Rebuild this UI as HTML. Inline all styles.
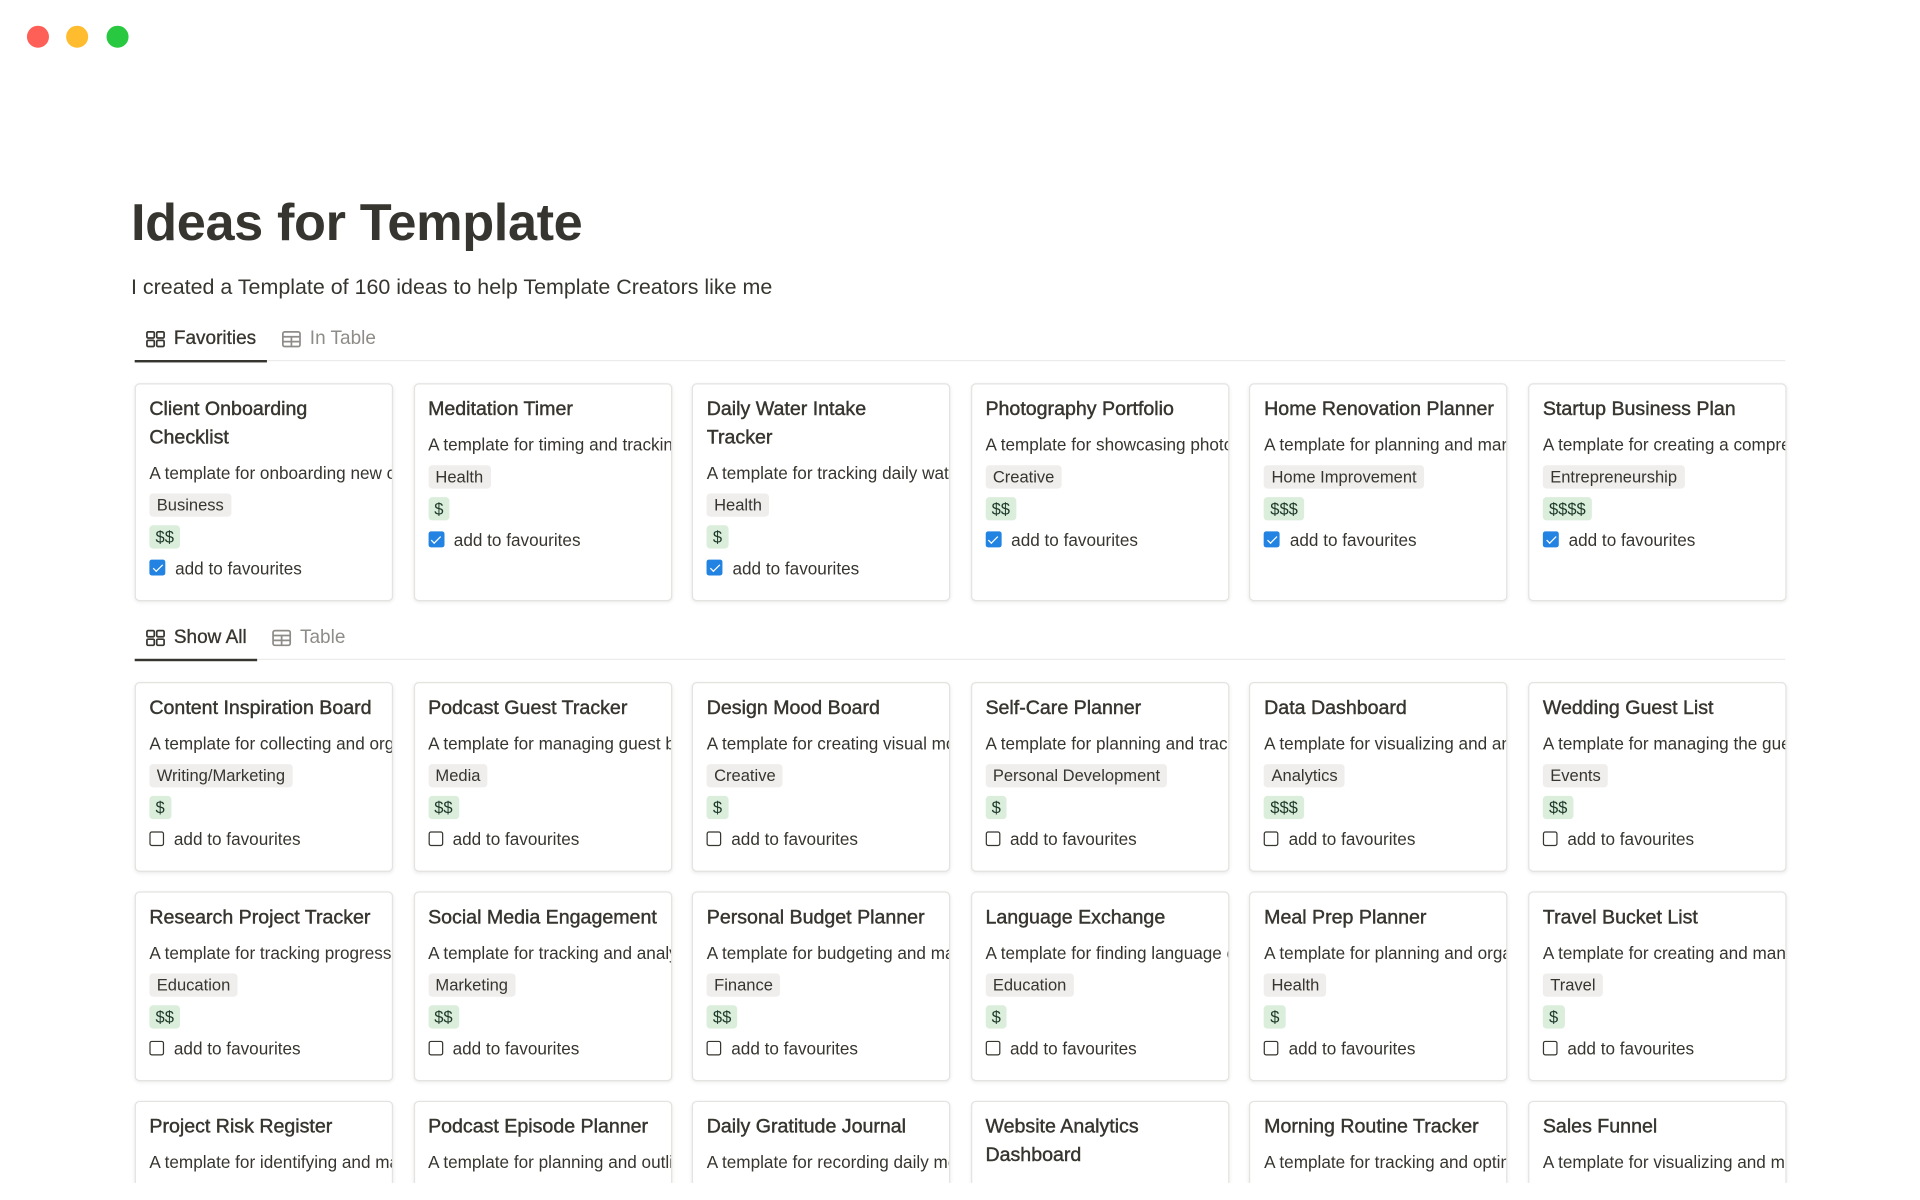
<!DOCTYPE html>
<html><head><meta charset="utf-8"><style>
html,body{margin:0;padding:0;background:#fff;width:1920px;height:1200px;overflow:hidden;}
#w{width:1568px;height:966px;overflow:hidden;position:relative;transform:scale(1.2244898);transform-origin:0 0;font-family:"Liberation Sans",sans-serif;color:#37352f;background:#fff;}
.dot{position:absolute;top:21px;width:18px;height:18px;border-radius:50%;}
h1{position:absolute;left:107px;top:158px;margin:0;font-size:42.7px;font-weight:700;letter-spacing:-0.3px;}
.sub{position:absolute;left:107px;top:224px;font-size:17.5px;}
.tabs{position:absolute;left:110px;width:1348px;height:30px;border-bottom:1.5px solid #ececeb;}
.tab{position:absolute;top:2px;height:22px;display:flex;align-items:center;font-size:15.5px;color:#8e8c88;}
.tab.on{color:#37352f;-webkit-text-stroke:0.25px #37352f;}
.tab.on:after{content:"";position:absolute;left:-9px;right:-9px;bottom:-8px;height:2.5px;background:#37352f;}
.tab svg{margin-right:7px}
.card{position:absolute;width:211px;border:1px solid #e4e3e0;border-radius:4px;box-shadow:0 1px 3px rgba(15,15,15,.08);overflow:hidden;padding:9px 0 0 11px;box-sizing:border-box;background:#fff;}
.t{font-size:16px;line-height:23px;padding-right:8px;-webkit-text-stroke:0.35px #37352f;}
.d{font-size:14px;height:26px;line-height:26px;margin-top:4px;white-space:nowrap;}
.r{height:26px;display:flex;align-items:center;}
.g{background:#efeeec;border-radius:3px;font-size:13.5px;padding:0 6px;height:19px;line-height:19px;}
.p{background:#dbeddb;color:#1c3829;border-radius:3px;font-size:13.5px;padding:0 5px;height:19px;line-height:19px;}
.c{height:25px;display:flex;align-items:center;font-size:14px;}
.cb{width:12px;height:12px;border:1.5px solid #37352f;border-radius:2px;margin-right:8px;box-sizing:border-box;}
.cb.on{border:none;background:#2383e2;width:13px;height:13px;position:relative;}
.cb.on:after{content:"";position:absolute;left:4.5px;top:1.5px;width:3px;height:7px;border:solid #fff;border-width:0 1.8px 1.8px 0;transform:rotate(45deg);}
</style></head><body><div id="w">
<div class="dot" style="left:22px;background:#fe5f57"></div>
<div class="dot" style="left:54px;background:#febc2e"></div>
<div class="dot" style="left:87px;background:#28c840"></div>
<h1>Ideas for Template</h1>
<div class="sub">I created a Template of 160 ideas to help Template Creators like me</div>

<div class="tabs" style="top:264px">
 <div class="tab on" style="left:9px"><svg width="16" height="14" viewBox="0 0 16 14"><g fill="none" stroke="#37352f" stroke-width="1.4"><rect x="1" y="1" width="6" height="5" rx="1"/><rect x="9" y="1" width="6" height="5" rx="1"/><rect x="1" y="8" width="6" height="5" rx="1"/><rect x="9" y="8" width="6" height="5" rx="1"/></g></svg>Favorities</div>
 <div class="tab" style="left:120px"><svg width="16" height="14" viewBox="0 0 16 14"><g fill="none" stroke="#8e8c88" stroke-width="1.4"><rect x="1" y="1" width="14" height="12" rx="1.5"/><path d="M1 5h14M1 9h14M8 5v8"/></g></svg>In Table</div>
</div>
<div class="tabs" style="top:508px">
 <div class="tab on" style="left:9px"><svg width="16" height="14" viewBox="0 0 16 14"><g fill="none" stroke="#37352f" stroke-width="1.4"><rect x="1" y="1" width="6" height="5" rx="1"/><rect x="9" y="1" width="6" height="5" rx="1"/><rect x="1" y="8" width="6" height="5" rx="1"/><rect x="9" y="8" width="6" height="5" rx="1"/></g></svg>Show All</div>
 <div class="tab" style="left:112px"><svg width="16" height="14" viewBox="0 0 16 14"><g fill="none" stroke="#8e8c88" stroke-width="1.4"><rect x="1" y="1" width="14" height="12" rx="1.5"/><path d="M1 5h14M1 9h14M8 5v8"/></g></svg>Table</div>
</div>

<div id="cards"></div>
</div>
<script>
const fav=[["Client Onboarding<br>Checklist","A template for onboarding new clients","Business","$$"],
["Meditation Timer","A template for timing and tracking meditation","Health","$"],
["Daily Water Intake<br>Tracker","A template for tracking daily water intake","Health","$"],
["Photography Portfolio","A template for showcasing photography","Creative","$$"],
["Home Renovation Planner","A template for planning and managing","Home Improvement","$$$"],
["Startup Business Plan","A template for creating a comprehensive","Entrepreneurship","$$$$"]];
const all=[["Content Inspiration Board","A template for collecting and organizing","Writing/Marketing","$"],
["Podcast Guest Tracker","A template for managing guest bookings","Media","$$"],
["Design Mood Board","A template for creating visual mood boards","Creative","$"],
["Self-Care Planner","A template for planning and tracking","Personal Development","$"],
["Data Dashboard","A template for visualizing and analyzing","Analytics","$$$"],
["Wedding Guest List","A template for managing the guest list","Events","$$"],
["Research Project Tracker","A template for tracking progress of","Education","$$"],
["Social Media Engagement","A template for tracking and analyzing","Marketing","$$"],
["Personal Budget Planner","A template for budgeting and managing","Finance","$$"],
["Language Exchange","A template for finding language exchange","Education","$"],
["Meal Prep Planner","A template for planning and organizing","Health","$"],
["Travel Bucket List","A template for creating and managing","Travel","$"],
["Project Risk Register","A template for identifying and managing","",""],
["Podcast Episode Planner","A template for planning and outlining","",""],
["Daily Gratitude Journal","A template for recording daily moments","",""],
["Website Analytics<br>Dashboard","A template for tracking website","",""],
["Morning Routine Tracker","A template for tracking and optimizing","",""],
["Sales Funnel","A template for visualizing and managing","",""]];
let h="";
function card(c,x,y,ht,on){
 h+=`<div class="card" style="left:${x}px;top:${y}px;height:${ht}px"><div class="t">${c[0]}</div><div class="d">${c[1]}</div>`+
 (c[2]?`<div class="r"><span class="g">${c[2]}</span></div><div class="r"><span class="p">${c[3]}</span></div><div class="c"><span class="cb${on?' on':''}"></span>add to favourites</div>`:'')+`</div>`;
}
fav.forEach((c,i)=>card(c,110+i*227.6,313,178,1));
all.forEach((c,i)=>card(c,110+(i%6)*227.6,557+Math.floor(i/6)*171,155,0));
document.getElementById("cards").innerHTML=h;
</script>
</body></html>
